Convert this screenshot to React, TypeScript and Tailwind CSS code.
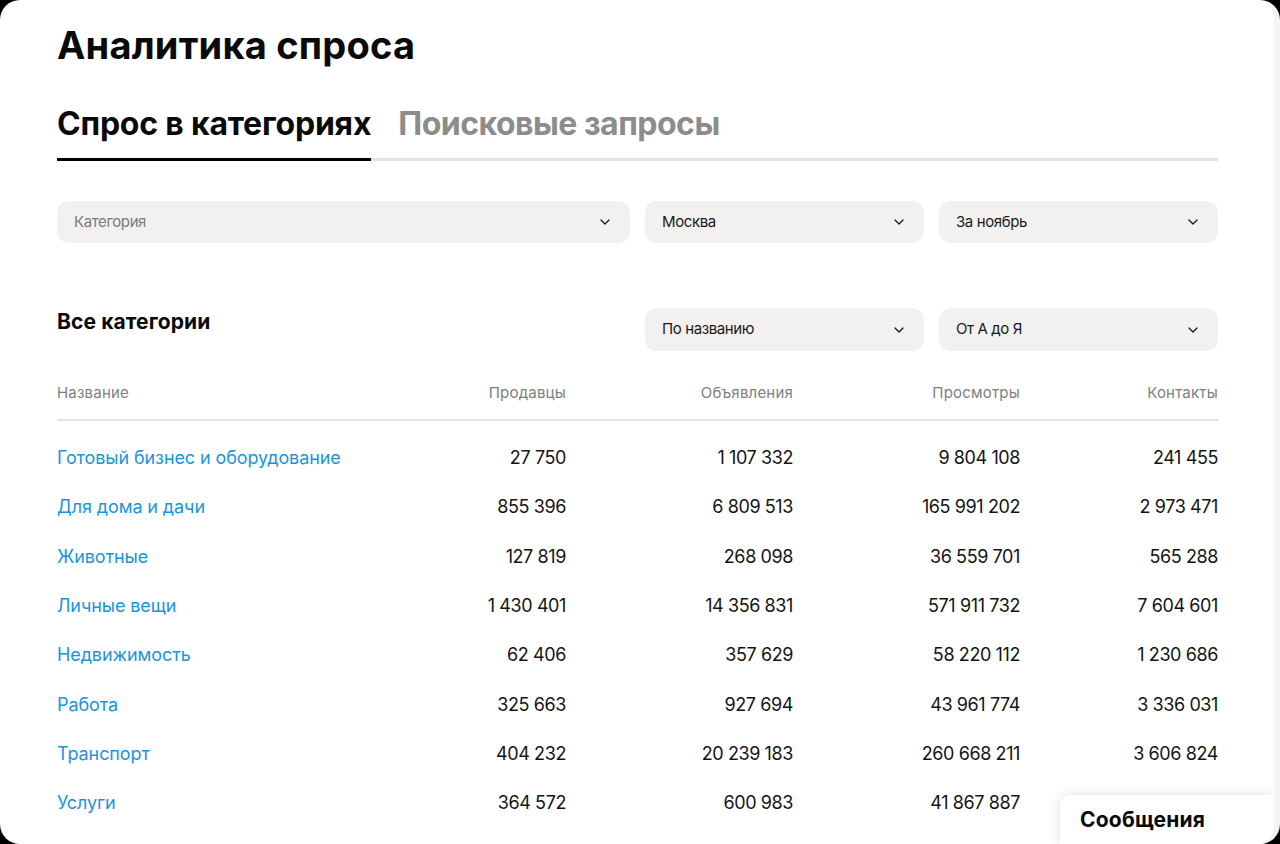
import { ChevronDown } from "lucide-react";

interface rowData {
  name: string;
  sellers: string;
  ads: string;
  views: string;
  contacts: string;
}

const rows: rowData[] = [
  { name: "Готовый бизнес и оборудование", sellers: "27 750", ads: "1 107 332", views: "9 804 108", contacts: "241 455" },
  { name: "Для дома и дачи", sellers: "855 396", ads: "6 809 513", views: "165 991 202", contacts: "2 973 471" },
  { name: "Животные", sellers: "127 819", ads: "268 098", views: "36 559 701", contacts: "565 288" },
  { name: "Личные вещи", sellers: "1 430 401", ads: "14 356 831", views: "571 911 732", contacts: "7 604 601" },
  { name: "Недвижимость", sellers: "62 406", ads: "357 629", views: "58 220 112", contacts: "1 230 686" },
  { name: "Работа", sellers: "325 663", ads: "927 694", views: "43 961 774", contacts: "3 336 031" },
  { name: "Транспорт", sellers: "404 232", ads: "20 239 183", views: "260 668 211", contacts: "3 606 824" },
  { name: "Услуги", sellers: "364 572", ads: "600 983", views: "41 867 887", contacts: "" },
];

function Select({ label, muted, className }: { label: string; muted?: boolean; className?: string }) {
  return (
    <div
      className={`flex items-center justify-between h-[42px] rounded-[12px] bg-[#f2f1f0] pl-[17px] pr-[17px] ${className ?? ""}`}
    >
      <span className={`text-[15px] tracking-[-0.4px] ${muted ? "text-[#7a7a7a]" : "text-[#1a1a1a]"}`}>{label}</span>
      <ChevronDown size={16} strokeWidth={2} className="text-[#1a1a1a]" />
    </div>
  );
}

export default function App() {
  return (
    <div className="w-[1280px] h-[844px] bg-black" style={{ fontFamily: "Inter, 'Noto Sans', sans-serif" }}>
      <div className="relative h-full overflow-hidden rounded-[20px] bg-white border-r-[6px] border-[#f4f4f4]">
        <div className="pl-[57px] pr-[56px] pt-[22px]">
          <h1 className="text-[38px] leading-[46px] font-bold text-[#0a0a0a] tracking-[0.2px]">Аналитика спроса</h1>

          <div className="mt-[37px] flex gap-[27px] border-b-[3px] border-[#e3e3e3]">
            <div className="-mb-[3px] border-b-[3px] border-black pb-[15px] text-[32px] leading-[38px] font-bold text-[#0a0a0a] tracking-[-0.2px]">
              Спрос в категориях
            </div>
            <div className="pb-[15px] text-[32px] leading-[38px] font-bold text-[#8c8c8c] tracking-[-0.5px]">
              Поисковые запросы
            </div>
          </div>

          <div className="mt-[40px] grid grid-cols-[573px_279px_279px] gap-[15px]">
            <Select label="Категория" muted />
            <Select label="Москва" />
            <Select label="За ноябрь" />
          </div>

          <div className="mt-[65px] flex items-start">
            <h2 className="flex-1 text-[21px] leading-[28px] font-bold text-[#0a0a0a] tracking-[0.1px]">Все категории</h2>
            <div className="grid grid-cols-[279px_279px] gap-[15px]">
              <Select label="По названию" className="h-[43px]" />
              <Select label="От А до Я" className="h-[43px]" />
            </div>
          </div>

          <div className="mt-[32px] grid grid-cols-[282px_227px_227px_227px_198px] border-b-2 border-[#e3e3e3] pb-[16px] text-[15px] leading-[20px] text-[#808080] tracking-[0.2px]">
            <div>Название</div>
            <div className="text-right">Продавцы</div>
            <div className="text-right">Объявления</div>
            <div className="text-right">Просмотры</div>
            <div className="text-right">Контакты</div>
          </div>

          <div className="pt-[12px]">
            {rows.map((row) => (
              <div
                key={row.name}
                className="grid grid-cols-[282px_227px_227px_227px_198px] h-[49.3px] items-center text-[18px] tracking-[-0.4px] text-[#141414]"
              >
                <div className="text-[#1a95dc] whitespace-nowrap tracking-[-0.1px]">{row.name}</div>
                <div className="text-right">{row.sellers}</div>
                <div className="text-right">{row.ads}</div>
                <div className="text-right">{row.views}</div>
                <div className="text-right">{row.contacts}</div>
              </div>
            ))}
          </div>
        </div>

        <div className="absolute bottom-0 right-0 flex h-[49px] w-[214px] items-center rounded-tl-[10px] bg-white pl-[20px] shadow-[0_0_14px_rgba(0,0,0,0.12)]">
          <span className="text-[21px] font-bold text-[#0a0a0a] tracking-[0.2px]">Сообщения</span>
        </div>
      </div>
    </div>
  );
}
